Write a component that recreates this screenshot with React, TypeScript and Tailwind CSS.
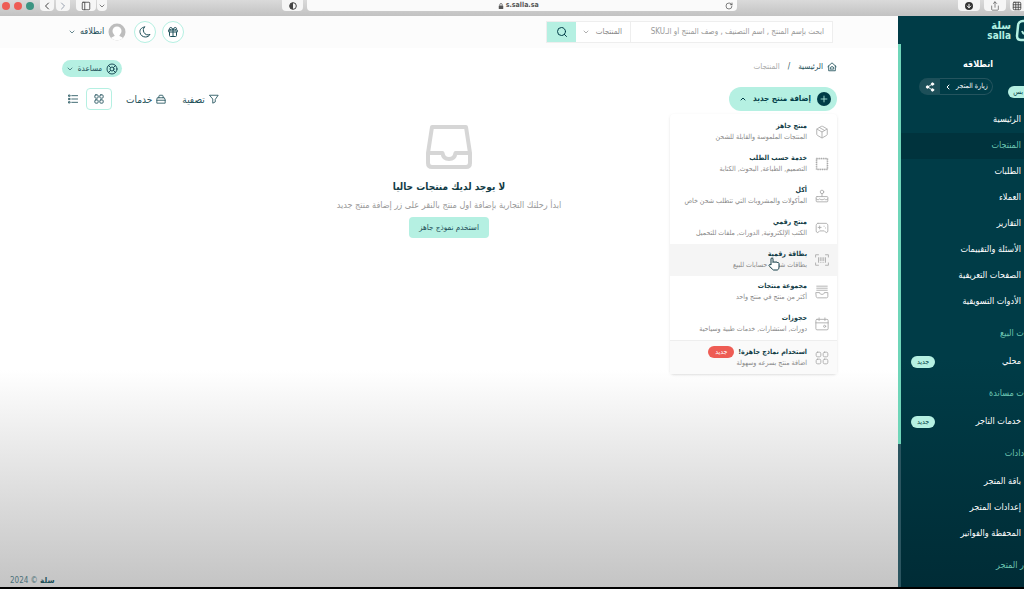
import React, { useState } from 'react';
import {
  Gift,
  ChevronDown,
  ChevronUp,
  ChevronLeft,
  ChevronRight,
  Search,
  LifeBuoy,
  Plus,
  Share2,
  PanelLeft,
  RotateCw,
  Share,
  ArrowDown,
  Package,
  Grid3x3,
} from 'lucide-react';

const iconProps = {
  viewBox: '0 0 24 24',
  fill: 'none',
  stroke: 'currentColor',
  strokeWidth: 1.5,
  strokeLinecap: 'round' as const,
  strokeLinejoin: 'round' as const,
};

const StampIcon = () => (
  <svg {...iconProps} strokeLinecap="butt" className="size-3.5">
    <rect x="3" y="3" width="18" height="18" strokeWidth="1" />
    <rect x="2.500" y="2.500" width="19" height="19" strokeWidth="2.500" strokeDasharray="2 1.800" />
  </svg>
);

const CakeIcon = () => (
  <svg {...iconProps} className="size-3.5">
    <rect x="2" y="13" width="20" height="9" rx="1.5" />
    <path d="M2 17c2.5 2 4 2 6 0 2.500 2 5.500 2 8 0 2 2 4 2 6 0M12 13V8" />
    <circle cx="12" cy="5" r="3" />
  </svg>
);

const GameIcon = () => (
  <svg {...iconProps} className="size-3.5">
    <path d="M5 4h14c2 0 3 2 3 4v9c0 3-3 4-4.500 1.500L16 17H8l-1.500 1.500C5 21 2 20 2 17V8c0-2 1-4 3-4zM8 8.500v5M5.500 11h5M15.500 9h.1M18 12h.1" />
  </svg>
);

const CardIcon = () => (
  <svg {...iconProps} className="size-3.5">
    <path d="M1 7V3h5M18 3h5v4M23 17v4h-5M6 21H1v-4M6 8v8M9 8v5M12 8v5M15 8v5M18 8v8M9 16h.1M12 16h.1M15 16h.1" />
  </svg>
);

const GroupIcon = () => (
  <svg {...iconProps} className="size-3.5">
    <path d="M3 2h18M3 5.500h18M3 9h18M2 13h6c0 2 1.500 3 4 3s4-1 4-3h6v7c0 1-1 2-2 2H4c-1 0-2-1-2-2z" />
  </svg>
);

const CalendarIcon = () => (
  <svg {...iconProps} className="size-3.5">
    <rect x="1.500" y="4" width="21" height="18" rx="2" />
    <path d="M1.500 10h21M7 1.500V6M17 1.500V6" />
    <circle cx="16.500" cy="16" r="1.800" />
  </svg>
);

const GridIcon = ({ className }: { className: string }) => (
  <svg {...iconProps} className={className}>
    <rect x="2" y="2" width="8" height="8" rx="2.500" />
    <rect x="14" y="2" width="8" height="8" rx="2.500" />
    <rect x="2" y="14" width="8" height="8" rx="2.500" />
    <rect x="14" y="14" width="8" height="8" rx="2.500" />
  </svg>
);

const MoonIcon = () => (
  <svg {...iconProps} strokeWidth={2} className="size-3">
    <path d="M11 2C4 3 1 8 2 13c1 6 6 9 11 9 4 0 7-2 9-5-5 2-10 0-12-4s-2-8 1-11z" />
  </svg>
);

const HomeIcon = () => (
  <svg {...iconProps} strokeWidth={2} className="size-2.5">
    <path d="M2 11 12 2l10 9M4 9.500V21h16V9.500M8 15a4 4 0 0 1 8 0v2H8z" />
  </svg>
);

const ToolboxIcon = () => (
  <svg {...iconProps} strokeWidth={2} className="size-2.5">
    <path d="M7 9V5c0-1 1-2 2-2h6c1 0 2 1 2 2v4M4 9h16l2 5v8H2v-8zM2 15h20" />
  </svg>
);

const FilterIcon = () => (
  <svg {...iconProps} strokeWidth={2} className="size-2.5">
    <path d="M2 3h20l-7 10v6l-6 3v-9z" />
  </svg>
);

const RowsIcon = () => (
  <svg {...iconProps} strokeWidth={2} className="size-2.5">
    <path d="M9 4h14M9 12h14M9 20h14" />
    <path d="M2 2.500h3v3H2zM2 10.500h3v3H2zM2 18.500h3v3H2z" />
  </svg>
);

const InboxIcon = () => (
  <svg viewBox="0 0 48 44" fill="none" stroke="#d6d6d6" strokeWidth="4" strokeLinejoin="round" className="h-11 w-12">
    <path d="M7 2h34l4 26v10c0 2.500-1.500 4-4 4H7c-2.500 0-4-1.500-4-4V28z" />
    <path d="M3 28h14.500c.5 4 3 6 6.500 6s6-2 6.500-6H45" />
  </svg>
);

const LockIcon = () => (
  <svg viewBox="0 0 12 12" className="size-1.5">
    <rect x="1.500" y="5" width="9" height="7" rx="1" fill="#555" />
    <path d="M3.500 5V3.500a2.500 2.500 0 0 1 5 0V5" fill="none" stroke="#555" strokeWidth="1.500" />
  </svg>
);

const Avatar = () => (
  <svg viewBox="0 0 18 18" className="size-[18px]">
    <defs>
      <clipPath id="round">
        <circle cx="9" cy="9" r="8.500" />
      </clipPath>
    </defs>
    <g clipPath="url(#round)">
      <rect width="18" height="18" fill="#bdbdbd" />
      <circle cx="9" cy="8" r="4.500" fill="#fff" />
      <path d="M6.500 10h5v3l3 1.500L16 18H2l1.500-3.500 3-1.500z" fill="#fff" />
    </g>
  </svg>
);

const LogoMark = () => (
  <svg viewBox="0 0 24 24" fill="none" stroke="#b5f0e2" className="size-6 shrink-0">
    <path d="M8 2h12v19H6c-3 0-4-2-4-4l1-10c0-3 2-5 5-5z" strokeWidth="2.500" />
    <path d="M7 12c1 3 3 4 6 2" strokeWidth="2" />
  </svg>
);

const HandCursor = () => (
  <svg viewBox="0 0 12 14" fill="#fff" stroke="#123c46" strokeWidth="1" strokeLinejoin="round" className="absolute top-[143px] left-[98px] h-3.5 w-3">
    <path d="M3 8V2c0-1.500 2-1.500 2 0v3.500c0-1 2-1 2 0 0-1 2-1 2 0V6c0-.8 2-.8 2 .5V10c0 2-1 3-2 3H5.500C4 12 2 10 1 8.500 1 7.500 2 7 3 8z" />
  </svg>
);

const productTypes = [
  { title: 'منتج جاهز', text: 'المنتجات الملموسة والقابلة للشحن', icon: <Package className="size-3.5" strokeWidth={1.5} /> },
  { title: 'خدمة حسب الطلب', text: 'التصميم, الطباعة, البحوث, الكتابة', icon: <StampIcon /> },
  { title: 'أكل', text: 'المأكولات والمشروبات التي تتطلب شحن خاص', icon: <CakeIcon /> },
  { title: 'منتج رقمي', text: 'الكتب الإلكترونية, الدورات, ملفات للتحميل', icon: <GameIcon /> },
  { title: 'بطاقة رقمية', text: 'بطاقات شحن, حسابات للبيع', icon: <CardIcon />, active: true },
  { title: 'مجموعة منتجات', text: 'أكثر من منتج في منتج واحد', icon: <GroupIcon /> },
  { title: 'حجوزات', text: 'دورات, استشارات, خدمات طبية وسياحية', icon: <CalendarIcon /> },
];

const navGroups = [
  {
    title: '',
    links: [
      { name: 'الرئيسية' },
      { name: 'المنتجات', active: true },
      { name: 'الطلبات' },
      { name: 'العملاء' },
      { name: 'التقارير' },
      { name: 'الأسئلة والتقييمات' },
      { name: 'الصفحات التعريفية' },
      { name: 'الأدوات التسويقية' },
    ],
  },
  { title: 'ت البيع', links: [{ name: 'محلي', isNew: true }] },
  { title: 'ت مساندة', links: [{ name: 'خدمات التاجر', isNew: true }] },
  { title: 'دادات', links: [{ name: 'باقة المتجر' }, { name: 'إعدادات المتجر' }, { name: 'المحفظة والفواتير' }] },
  { title: 'ر المتجر', links: [] },
];

function BrowserBar() {
  return (
    <div dir="ltr" className="h-4 shrink-0 flex items-start bg-gradient-to-b from-[#dadada] to-[#c2c2c2] text-[#444]">
      <div className="w-[30%] flex items-start">
        <div className="flex gap-1 pt-0.5 pl-0.5 w-10">
          <span className="size-2 rounded-full bg-[#ee5c54]" />
          <span className="size-2 rounded-full bg-[#ee5c54]" />
          <span className="size-2 rounded-full bg-[#3c9482]" />
        </div>
        <button aria-label="Back" className="w-3.5 h-[11px] bg-[#f6f6f6] rounded-b flex items-center justify-center"><ChevronLeft className="size-3" /></button>
        <button aria-label="Forward" className="w-3.5 h-[11px] ml-0.5 bg-[#f6f6f6] rounded-b flex items-center justify-center text-gray-400"><ChevronRight className="size-3" /></button>
        <button aria-label="Sidebar" className="w-5 h-[11px] ml-1.5 bg-[#f6f6f6] rounded-b flex items-center justify-center"><PanelLeft className="size-2.5" /></button>
        <button aria-label="Tab groups" className="w-2.5 h-[11px] ml-px bg-[#f6f6f6] rounded-b flex items-center justify-center"><ChevronDown className="size-2" /></button>
        <button aria-label="Privacy" className="w-[21px] h-[11px] ml-auto mr-1 bg-[#f6f6f6] rounded-b flex items-center justify-center">
          <svg viewBox="0 0 12 12" className="size-2"><circle cx="6" cy="6" r="5" fill="none" stroke="#444" strokeWidth="1.500" /><path d="M6 1a5 5 0 0 0 0 10z" fill="#444" /></svg>
        </button>
      </div>
      <div className="w-[42%] h-[11px] px-1 bg-[#fafafa] rounded-b flex items-center">
        <div className="flex-1 flex items-center justify-center gap-0.5 text-[7px] leading-none font-bold text-[#555]">
          <LockIcon />
          <span>s.salla.sa</span>
        </div>
        <button aria-label="Reload"><RotateCw className="size-2" /></button>
      </div>
      <div className="flex-1 flex items-start justify-end gap-1">
        <button aria-label="Downloads" className="w-[22px] h-[11px] bg-[#f6f6f6] rounded-b flex items-center justify-center">
          <span className="size-2 rounded-full bg-[#333] text-white flex items-center justify-center"><ArrowDown className="size-1.5" strokeWidth={4} /></span>
        </button>
        <button aria-label="Share" className="w-[22px] h-[11px] bg-[#f6f6f6] rounded-b flex items-center justify-center"><Share className="size-2.5" strokeWidth={1.5} /></button>
        <button aria-label="Tabs" className="w-3.5 h-[11px] bg-[#f6f6f6] rounded-bl flex items-center justify-center"><Grid3x3 className="size-2.5" /></button>
      </div>
    </div>
  );
}

function SideBar() {
  return (
    <aside className="w-[126px] shrink-0 flex overflow-hidden bg-gradient-to-b from-[#003c47] from-60% to-[#002c36] text-white">
      <div className="flex-1 min-w-0">
        <div dir="ltr" className="h-7 mb-3 pt-0.5 pl-[86px] flex items-center gap-1">
          <div className="flex flex-col items-end w-6 shrink-0 text-[#b5f0e2] font-bold">
            <span className="text-[11px] leading-[10px]">سلة</span>
            <span className="text-[10px] leading-[10px]">salla</span>
          </div>
          <LogoMark />
        </div>
        <h2 className="pr-[31px] text-[9px] leading-4 font-bold">انطلاقه</h2>
        <div className="relative mt-1.5 mb-3 pr-[31px] flex">
          <a href="#store" className="w-[53px] h-[17px] rounded-r-full border border-[#24545e] border-l-0 flex items-center justify-center gap-1 text-[7px] whitespace-nowrap">
            زيارة المتجر
            <ChevronLeft className="size-2 shrink-0" strokeWidth={3} />
          </a>
          <button aria-label="مشاركة" className="w-[21px] h-[17px] rounded-l-full bg-[#1d4f59] flex items-center justify-center">
            <Share2 className="size-2.5 fill-white" />
          </button>
          <span className="absolute right-0 top-2 w-4 h-3 pr-px rounded-l-full bg-[#b5f0e2] text-[#003c47] text-[7px] leading-[12px]">بس</span>
        </div>
        <nav>
          {navGroups.map((group, index) => (
            <div key={index}>
              {group.title && (
                <h3 className="h-[34px] pt-1 text-[9px] flex items-center text-[#6cc5b2]">{group.title}</h3>
              )}
              {group.links.map((link) => (
                <a
                  key={link.name}
                  href="#nav"
                  className={`h-[26px] pr-[3px] pl-2.5 flex items-center justify-between text-[9px] whitespace-nowrap ${link.active ? 'bg-[#00333d] text-[#6cc5b2]' : ''}`}
                >
                  {link.name}
                  {link.isNew && (
                    <span className="w-6 h-3 rounded-full bg-[#b5f0e2] text-[#003c47] text-[7px] flex items-center justify-center">جديد</span>
                  )}
                </a>
              ))}
            </div>
          ))}
        </nav>
      </div>
      <div className="w-[3px] flex flex-col pt-7">
        <div className="h-[400px] bg-[#6fd6b9]" />
        <div className="flex-1 bg-[#2b5560]" />
      </div>
    </aside>
  );
}

function Header() {
  return (
    <header className="h-8 pr-[65px] pl-[68px] flex items-center justify-between bg-[#fcfcfc]">
      <form className="w-[287px] h-[22px] flex border border-[#eee] bg-white text-[#888]">
        <input
          type="text"
          aria-label="بحث"
          placeholder="ابحث بإسم المنتج , اسم التصنيف , وصف المنتج أو الـSKU"
          className="flex-1 min-w-0 px-2 text-[8px] placeholder:text-[#999] outline-none"
        />
        <div className="relative w-[55px] border-r border-[#eee] flex items-center">
          <select aria-label="نوع البحث" className="w-full pr-2 text-[8px] leading-4 appearance-none outline-none">
            <option>المنتجات</option>
          </select>
          <ChevronDown className="absolute left-1.5 top-1.5 size-2" />
        </div>
        <button type="button" aria-label="ابحث" className="w-[29px] bg-[#b5f0e2] text-[#003c47] flex items-center justify-center">
          <Search className="size-3" />
        </button>
      </form>
      <div className="flex items-center gap-1.5 text-[#1d4f59]">
        <button aria-label="هدايا" className="size-[22px] rounded-full border border-[#b5f0e2] bg-white flex items-center justify-center"><Gift className="size-3" /></button>
        <button aria-label="الوضع الليلي" className="size-[22px] rounded-full border border-[#b5f0e2] bg-white flex items-center justify-center"><MoonIcon /></button>
        <button className="flex items-center gap-1 pr-0.5 text-[9px]">
          <Avatar />
          انطلاقه
          <ChevronDown className="size-2" />
        </button>
      </div>
    </header>
  );
}

function ProductMenu() {
  return (
    <div className="absolute z-10 right-0 top-[27px] w-[167px] pt-0.5 bg-white rounded-sm shadow-sm">
      <ul>
        {productTypes.map((item) => (
          <li key={item.title}>
            <a href="#product" className={`h-8 px-2 flex items-center gap-2 ${item.active ? 'bg-[#f5f5f5]' : ''}`}>
              <span className="text-[#aaa]">{item.icon}</span>
              <span className="whitespace-nowrap">
                <b className="block text-[7px] leading-[11px] text-[#123c46]">{item.title}</b>
                <span className="block text-[7px] leading-[11px] text-[#888]">{item.text}</span>
              </span>
            </a>
          </li>
        ))}
        <li className="border-t border-[#eee]">
          <a href="#templates" className="h-[33px] px-2 flex items-center gap-2 bg-[#fafafa]">
            <span className="text-[#aaa]"><GridIcon className="size-3.5" /></span>
            <span className="whitespace-nowrap">
              <span className="flex items-center gap-1">
                <b className="text-[7px] leading-[11px] text-[#123c46]">استخدام نماذج جاهزة!</b>
                <span className="w-[26px] h-3 rounded-full bg-[#ee5c54] text-white text-[7px] flex items-center justify-center">جديد</span>
              </span>
              <span className="block text-[7px] leading-[11px] text-[#888]">اضافة منتج بسرعه وسهولة</span>
            </span>
          </a>
        </li>
      </ul>
      <HandCursor />
    </div>
  );
}

export default function App() {
  const [menuOpen, setMenuOpen] = useState(true);

  return (
    <div
      dir="rtl"
      className="min-h-screen flex flex-col overflow-hidden border-b-2 border-black font-['DejaVu_Sans_Condensed','DejaVu_Sans',sans-serif]"
    >
      <BrowserBar />
      <div className="flex-1 flex">
        <SideBar />
        <main className="flex-1 min-w-0 flex flex-col bg-gradient-to-b from-white from-62% to-[#c4c4c4]">
          <Header />
          <div className="pr-[61px] pl-[62px] pt-3">
            <div className="flex items-start justify-between">
              <nav className="flex items-center gap-1 text-[8px] leading-[14px] text-[#1d4f59]">
                <HomeIcon />
                <a href="#home">الرئيسية</a>
                <span className="px-1">/</span>
                <span className="text-[#aaa]">المنتجات</span>
              </nav>
              <button className="w-[60px] h-[17px] rounded-full bg-[#b5f0e2] text-[#1d4f59] text-[8px] flex items-center justify-center gap-1">
                <LifeBuoy className="size-3" />
                مساعدة
                <ChevronDown className="size-2" />
              </button>
            </div>
            <div className="mt-2.5 flex items-center justify-between">
              <div className="relative">
                <button
                  onClick={() => setMenuOpen(!menuOpen)}
                  className="w-[108px] h-6 px-1.5 rounded-full bg-[#b5f0e2] text-[#003c47] text-[8px] font-bold flex items-center gap-1.5 whitespace-nowrap"
                >
                  <span className="size-3.5 shrink-0 rounded-full bg-[#003c47] text-[#b5f0e2] flex items-center justify-center">
                    <Plus className="size-2.5" />
                  </span>
                  إضافة منتج جديد
                  <ChevronUp className="size-2 shrink-0" strokeWidth={3} />
                </button>
                {menuOpen && <ProductMenu />}
              </div>
              <div className="flex items-center text-[#1d4f59] text-[10px]">
                <button className="flex items-center gap-1"><FilterIcon />تصفية</button>
                <button className="flex items-center gap-1 mr-4"><ToolboxIcon />خدمات</button>
                <button aria-label="شبكة" className="w-[26px] h-[22px] mr-3.5 rounded-sm border border-[#b5f0e2] bg-white flex items-center justify-center"><GridIcon className="size-2.5 stroke-2" /></button>
                <button aria-label="قائمة" className="mr-2 ml-1.5"><RowsIcon /></button>
              </div>
            </div>
          </div>
          <section className="mt-3.5 flex flex-col items-center">
            <InboxIcon />
            <h1 className="mt-2.5 text-[10px] leading-4 font-bold text-[#123c46]">لا يوجد لديك منتجات حاليا</h1>
            <p className="mt-0.5 text-[9px] leading-4 text-[#999]">ابدأ رحلتك التجارية بإضافة اول منتج بالنقر على زر إضافة منتج جديد</p>
            <button className="mt-1 w-20 h-[21px] rounded-sm bg-[#b5f0e2] text-[#1d4f59] text-[8px]">استخدم نموذج جاهز</button>
          </section>
          <footer className="mt-auto mr-auto pl-2.5 text-[8px] leading-3 text-[#4b7079]">
            <b className="text-[#1d4f59]">سلة</b> © 2024
          </footer>
        </main>
      </div>
    </div>
  );
}
